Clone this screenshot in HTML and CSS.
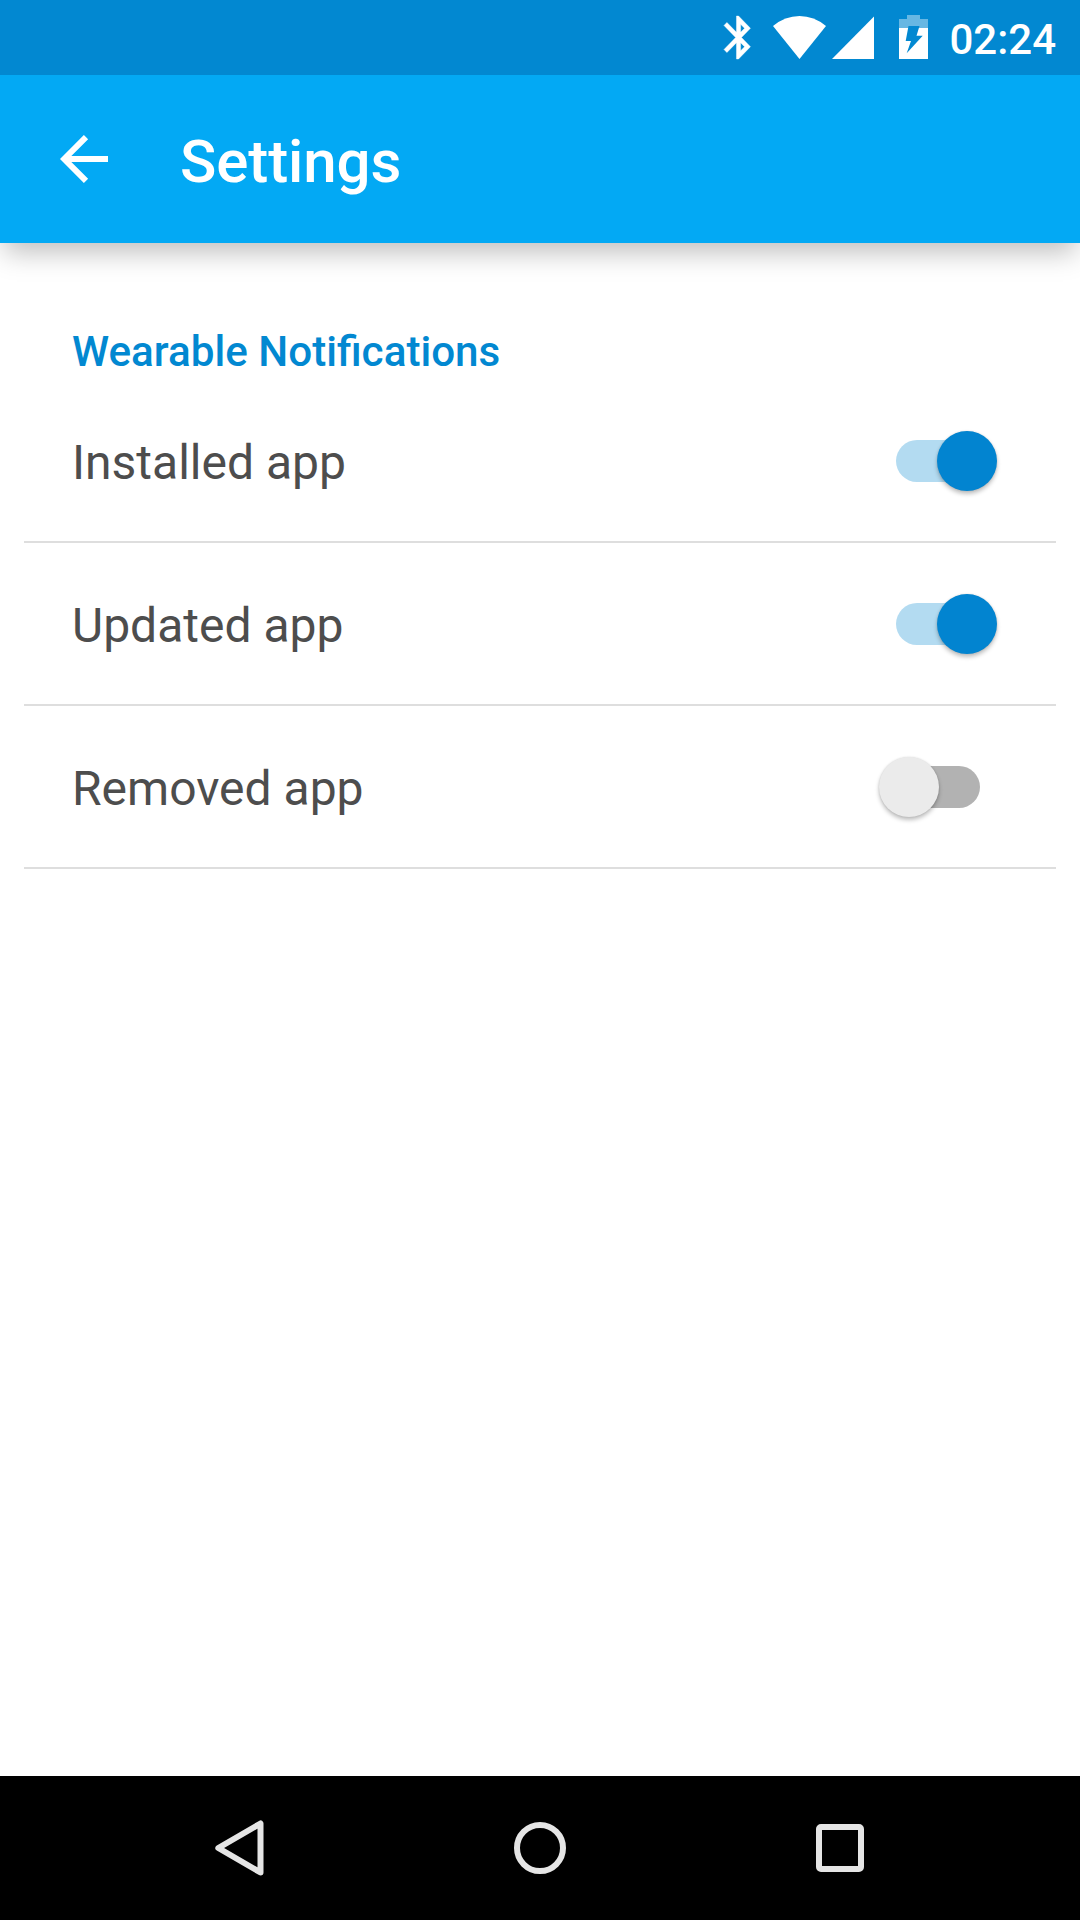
FILE: index.html
```html
<!DOCTYPE html>
<html lang="en">
<head>
<meta charset="utf-8">
<title>Settings</title>
<link rel="stylesheet" href="styles.css">
</head>
<body>
<div class="screen">
  <div class="status-bar">
    <svg class="status-icons" width="240" height="75" viewBox="700 0 240 75" fill="#fff" aria-hidden="true">
      <path stroke="#fff" stroke-width=".2" transform="translate(713.600 11.700) scale(2.080 2.150)" d="M17.710 7.710L12 2h-1v7.590L6.410 5 5 6.410 10.590 12 5 17.590 6.410 19 11 14.410V22h1l5.710-5.710-4.300-4.290 4.300-4.290zM13 5.830l1.880 1.880L13 9.590V5.830zm1.880 10.460L13 18.170v-3.760l1.880 1.880z"/>
      <path d="M773 26 Q785 16 799.5 16 T826 26 L799.5 59 Z"/>
      <path d="M832 59 L874 16.5 V59 Z"/>
      <path d="M907 15 h13 v4 h8 v9 h-29 v-9 h8 Z" fill-opacity=".4"/>
      <path d="M899 28 h29 v31 h-29 Z"/>
      <path d="M908.500 26 H919.500 L916.500 35.700 H922.700 L906.700 53.300 L911 41 H905.700 Z" fill="#0288d1"/>
    </svg>
    <span class="clock">02:24</span>
  </div>
  <header class="toolbar">
    <svg class="back" width="48" height="48" viewBox="0 0 48 48" fill="none" stroke="#fff" stroke-width="6" aria-hidden="true">
      <path d="M48 24 H5 M26 2.100 L4.200 24 L26 45.900"/>
    </svg>
    <h1 class="title">Settings</h1>
  </header>
  <main class="content">
    <h2 class="section-title">Wearable Notifications</h2>
    <ul class="list">
      <li class="row"><span class="label">Installed app</span><span class="switch on"><span class="thumb"></span></span></li>
      <li class="row"><span class="label">Updated app</span><span class="switch on"><span class="thumb"></span></span></li>
      <li class="row"><span class="label">Removed app</span><span class="switch"><span class="thumb"></span></span></li>
    </ul>
  </main>
  <nav class="nav-bar">
    <svg width="60" height="60" viewBox="0 0 60 60"><path d="M50.500 5.500 V54.500 L8.300 30 Z"/></svg>
    <svg width="60" height="60" viewBox="0 0 60 60"><circle cx="30" cy="30" r="23"/></svg>
    <svg width="60" height="60" viewBox="0 0 60 60"><rect x="9" y="9" width="42" height="42" rx="2"/></svg>
  </nav>
</div>
</body>
</html>
```
FILE: styles.css
```css
* { box-sizing: border-box; }

body {
  margin: 0;
  background: #fff;
  font-family: Roboto, sans-serif;
}

.screen {
  display: flex;
  flex-direction: column;
  width: 1080px;
  height: 1920px;
  overflow: hidden;
}

.status-bar {
  z-index: 1;
  display: flex;
  justify-content: flex-end;
  align-items: center;
  height: 75px;
  padding-right: 24px;
  background: #0288d1;
}

.status-icons { margin-right: 9px; }

.clock {
  padding-top: 5px;
  color: #fff;
  font-size: 42px;
  font-weight: 500;
  line-height: 50px;
}

.toolbar {
  display: flex;
  align-items: center;
  gap: 72px;
  height: 168px;
  padding-left: 60px;
  background: #03a9f4;
  box-shadow: 0 13px 26px -4px rgba(0, 0, 0, .26);
}

.title {
  margin: 0;
  padding-top: 6px;
  color: #fff;
  font-size: 60px;
  font-weight: 500;
  line-height: 70px;
  letter-spacing: -.1px;
}

.content {
  flex: 1;
  padding: 84px 24px 0;
}

.section-title {
  margin: 0;
  padding-left: 48px;
  color: #0288d1;
  font-size: 42.2px;
  font-weight: 500;
  line-height: 50px;
}

.list {
  margin: 3px 0 0;
  padding: 0;
  list-style: none;
}

.row {
  display: flex;
  justify-content: space-between;
  align-items: center;
  height: 163px;
  padding: 0 58px 0 48px;
  border-bottom: 2px solid #dedede;
}

.label {
  padding-top: 4px;
  color: #4d4d4d;
  font-size: 48px;
  line-height: 56px;
}

.switch {
  display: flex;
  align-items: center;
  width: 84px;
  height: 42px;
  margin: 0 18px;
  border-radius: 21px;
  background: #b2b2b2;
}

.thumb {
  flex: none;
  width: 60px;
  height: 60px;
  margin-left: -17.5px;
  border-radius: 50%;
  background: #ebebeb;
  box-shadow: 0 3px 4px rgba(0, 0, 0, .25), 0 0 2px rgba(0, 0, 0, .12);
}

.switch.on { background: #b3dbf1; }

.switch.on .thumb {
  margin-left: 41px;
  background: #0284d0;
}

.nav-bar {
  display: flex;
  justify-content: center;
  align-items: center;
  gap: 240px;
  height: 144px;
  background: #000;
}

.nav-bar svg {
  fill: none;
  stroke: #e5e5e5;
  stroke-width: 6;
  stroke-linejoin: round;
}
```
